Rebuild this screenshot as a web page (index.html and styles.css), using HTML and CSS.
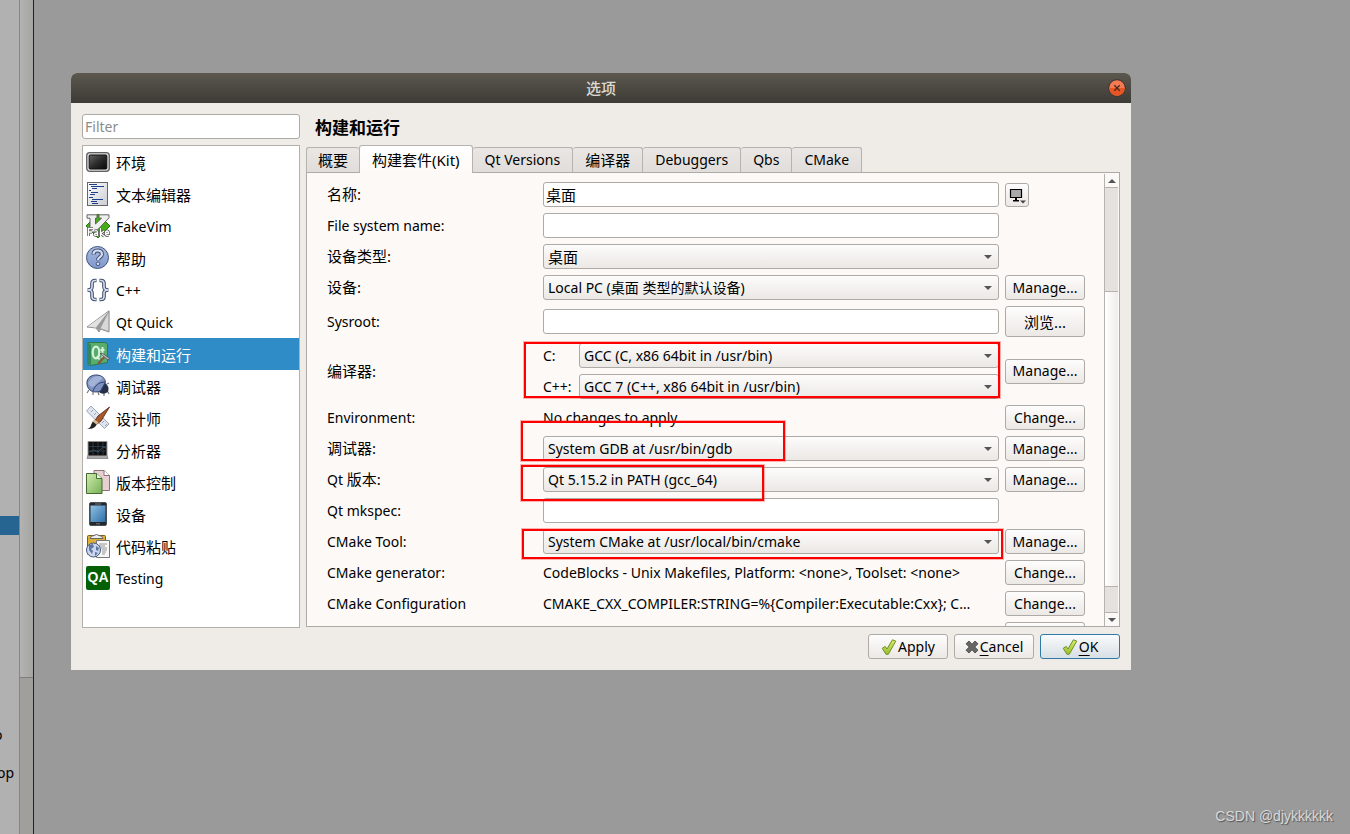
FILE: index.html
```html
<!DOCTYPE html>
<html lang="zh-CN">
<head>
<meta charset="utf-8">
<title>选项</title>
<link rel="stylesheet" href="styles.css">
</head>
<body>
<svg class="defs" width="0" height="0" aria-hidden="true">
  <defs>
    <linearGradient id="dark" x1="0" y1="0" x2="1" y2="1"><stop offset="0" stop-color="#666"/><stop offset=".5" stop-color="#2c2c2c"/><stop offset="1" stop-color="#080808"/></linearGradient>
    <linearGradient id="paper" x1="0" y1="0" x2="1" y2="1"><stop offset="0" stop-color="#fff"/><stop offset="1" stop-color="#c9ccd2"/></linearGradient>
    <linearGradient id="blue" x1="0" y1="0" x2="0" y2="1"><stop offset="0" stop-color="#a9bbe0"/><stop offset="1" stop-color="#7f97cb"/></linearGradient>
    <linearGradient id="screen" x1="0" y1="0" x2="1" y2="1"><stop offset="0" stop-color="#8fc1e4"/><stop offset="1" stop-color="#2f6fa8"/></linearGradient>
    <linearGradient id="green" x1="0" y1="0" x2="1" y2="1"><stop offset="0" stop-color="#d3ecb0"/><stop offset="1" stop-color="#74b055"/></linearGradient>
    <linearGradient id="tick" x1="0" y1="0" x2="0" y2="1"><stop offset="0" stop-color="#d8ec6a"/><stop offset="1" stop-color="#97bf2c"/></linearGradient>
    <symbol id="i-check" viewBox="0 0 16 16"><path d="M1.200 9.300 4.200 7.400l1.800 2.600L11.400 .8l3.400 1.300L7.300 15.300H5z" fill="url(#tick)" stroke="#6f8f2a" stroke-width="1" stroke-linejoin="round"/></symbol>
  </defs>
</svg>
<div class="desktop">
  <aside class="behind">
    <div class="behind-list">
      <div class="behind-selected"></div>
      <span class="behind-text first">o</span>
      <span class="behind-text second">op</span>
    </div>
    <div class="behind-scroll"><div class="behind-handle"></div></div>
  </aside>
  <main class="stage">
    <section class="dialog" aria-label="选项">
      <header class="titlebar">
        <span class="title">选项</span>
        <button class="close" aria-label="关闭"><svg viewBox="0 0 18 18" width="18" height="18"><circle cx="9" cy="9" r="8.300" fill="#f37a52" stroke="#37302b" stroke-width="1"/><path d="M1.200 9a7.800 7.800 0 0 0 15.600 0z" fill="#e65523"/><path d="m6.300 6.300 5.400 5.400m0-5.400-5.400 5.400" stroke="#49281b" stroke-width="1.300"/></svg></button>
      </header>
      <div class="body">
        <nav class="side">
          <input class="box filter" type="text" placeholder="Filter" aria-label="Filter">
          <ul class="categories">
            <li class="cjk"><svg class="icon" viewBox="0 0 24 24"><rect x=".7" y="2.700" width="22.600" height="18.600" rx="3" fill="#d9d9d9" stroke="#606060" stroke-width="1.300"/><rect x="3.200" y="5" width="17.600" height="14" rx="1" fill="url(#dark)" stroke="#111"/></svg><span>环境</span></li>
            <li class="cjk"><svg class="icon" viewBox="0 0 24 24"><rect x="1.500" y=".5" width="20" height="23" fill="url(#paper)" stroke="#666"/><path d="M3 2.500h8M5 4.500h13M6 6.500h5M3 8.500h2M5 10.500h7M4 12.500h5M3 15.500h4M6 17.500h11M5 19.500h6M6 21.500h6" stroke="#1f3f8d" stroke-width="1"/></svg><span>文本编辑器</span></li>
            <li><svg class="icon" viewBox="0 0 24 24"><path d="M12 0 24 12 12 24 0 12z" fill="#44ad18" stroke="#287a0c"/><path d="M1 .8h10v3.400H9.500V10l6-5.800H13V.8h10v3L9.500 18H4V4.200H1z" fill="#efefef" stroke="#555" stroke-width=".9"/><path d="M2.500 22v-7.500H7M2.500 18H6M8.500 17q3-1 3 1v4M11.500 19q-3 0-3 1.500t3 .5M14.500 14v8M18 17l-3.500 2.500L18 22M19.500 19.500h3q0-2.500-1.500-2.500t-1.500 2.500 3 2" fill="none" stroke="#555" stroke-width="2.800"/><path d="M2.500 22v-7.500H7M2.500 18H6M8.500 17q3-1 3 1v4M11.500 19q-3 0-3 1.500t3 .5M14.500 14v8M18 17l-3.500 2.500L18 22M19.500 19.500h3q0-2.500-1.500-2.500t-1.500 2.500 3 2" fill="none" stroke="#fff" stroke-width="1.300"/></svg><span>FakeVim</span></li>
            <li class="cjk"><svg class="icon" viewBox="0 0 24 24"><circle cx="11.500" cy="11.500" r="11" fill="url(#blue)" stroke="#43567f"/><path d="M7.500 8.500q0-4 4.200-4t4.200 3.700c0 2.800-3.900 3-3.900 6" fill="none" stroke="#3c4c70" stroke-width="4"/><path d="M7.500 8.200q0-3.700 4.200-3.700t4.200 3.700c0 2.800-3.900 3-3.900 5.700" fill="none" stroke="#d5def1" stroke-width="2.200"/><circle cx="12" cy="17.800" r="1.800" fill="#d5def1" stroke="#3c4c70" stroke-width=".9"/></svg><span>帮助</span></li>
            <li><svg class="icon" viewBox="0 0 24 24"><path d="M10.500 2.500H9Q6 2.500 6 5.500V9q0 3-4.500 3Q6 12 6 15v3.500q0 3 3 3h1.500M13.500 2.500H15q3 0 3 3V9q0 3 4.500 3-4.500 0-4.500 3v3.500q0 3-3 3h-1.500" fill="none" stroke="#3d4b68" stroke-width="3.600"/><path d="M10 2.500H9Q6 2.500 6 5.500V9q0 3-4.500 3Q6 12 6 15v3.500q0 3 3 3h1M14 2.500h1q3 0 3 3V9q0 3 4.500 3-4.500 0-4.500 3v3.500q0 3-3 3h-1" fill="none" stroke="#d3ddef" stroke-width="1.600"/></svg><span>C++</span></li>
            <li><svg class="icon" viewBox="0 0 24 24"><path d="M23 .8 1 17l9 1 3 4 1.500-3 8.500 3z" fill="#d0d0d0" stroke="#858585" stroke-width=".9"/><path d="M22 2 2 16.600l8 1z" fill="#e2e2e2"/><path d="m22.500 1.500-12.500 16 3 4z" fill="#999"/><path d="m22.800 1.500-8.800 17 8.800 3z" fill="#d8d8d8" stroke="#8b8b8b" stroke-width=".6"/></svg><span>Qt Quick</span></li>
            <li class="cjk selected"><svg class="icon" viewBox="0 0 24 24"><path d="M2 .5h17l2.500 2v18L4 23.500l-2-1z" fill="#59ad6b" stroke="#2d7a4c"/><path d="M2 .5 5 3v20l-3-1z" fill="#35855b"/><ellipse cx="10" cy="10.500" rx="3.300" ry="5.800" fill="none" stroke="#d8f3dd" stroke-width="2.200"/><path d="m11 14 2.500 3.500M16.500 5v10h2M14.500 8h4" stroke="#d8f3dd" stroke-width="1.900" fill="none"/><path d="m19 14-7 8" stroke="#8a5645" stroke-width="2.200"/><path d="M14 11.500q3-1 5 1.500l4.500 3.500-1.500 1.500-5-4z" fill="#b8babd" stroke="#4a4f52" stroke-width=".8"/></svg><span>构建和运行</span></li>
            <li class="cjk"><svg class="icon" viewBox="0 0 24 24"><path d="m3 16-2 3m6-1v3m5-3 1 3m8-11 2-1m-1 9 1 2m-5-1v3" stroke="#777" stroke-width="1.200"/><path d="M18 8q6 4 4 10-6 4-10-1z" fill="#26304c"/><path d="M1 10.500C0 3.500 6 .5 11.500 1q7 1 8 7l-5 9C8 19.500 2 17 1 10.500z" fill="#7f93c2" stroke="#34446f"/><path d="M2 9Q6 2 12 2q3 0 5 2L7 13q-4-1-5-4" fill="#a3b3d8"/><path d="M19 8q-9 0-12 9" fill="none" stroke="#34446f"/></svg><span>调试器</span></li>
            <li class="cjk"><svg class="icon" viewBox="0 0 24 24"><path d="m5 0 18 18-4.500 4.500L.5 5z" fill="#dfe5ef" stroke="#9aa6b8"/><path d="m7 4-2 2m5 1-2 2m5 1-2 2m7 3-2 2m5 1-2 2" stroke="#9aa6b8"/><path d="M23.500 1 12 10l-4 6 3 2 4-3z" fill="#a9582c" stroke="#5d2e18" stroke-width=".9"/><path d="m7 15 4 3-2 3q-3 2.500-8 2 3.500-1 4-4z" fill="#222"/><path d="m8.500 13.500 4 3-2 2-4-3z" fill="#d6b893"/></svg><span>设计师</span></li>
            <li class="cjk"><svg class="icon" viewBox="0 0 24 24"><path d="M2 3.500h19v13l1 4H1l1-4z" fill="#a9a9a9" stroke="#757575" stroke-width=".7"/><rect x="2.500" y="4" width="18" height="13.500" fill="#111"/><path d="M7 4v13M12 4v13M17 4v13M3 8.500h17M3 13h17" stroke="#354653" stroke-width=".7"/><path d="m3 14 5-2 4 2 5-5 3 1" fill="none" stroke="#456473" stroke-width=".7"/></svg><span>分析器</span></li>
            <li class="cjk"><svg class="icon" viewBox="0 0 24 24"><path d="M8 .5h10l5.500 5v15H8z" fill="#e7cfd2" stroke="#8d7376"/><path d="M18 .5v5h5.500" fill="#fff" stroke="#8d7376"/><path d="M.5 3.500h10l5.500 5v15H.5z" fill="url(#green)" stroke="#426b31"/><path d="M10.500 3.500v5H16" fill="#edf8df" stroke="#426b31"/></svg><span>版本控制</span></li>
            <li class="cjk"><svg class="icon" viewBox="0 0 24 24"><rect x="3.500" y=".5" width="17" height="23" rx="1.500" fill="#22282e" stroke="#4b5054"/><rect x="4.500" y="3.500" width="15" height="16.500" fill="url(#screen)"/><path d="M9 2h6M10 21.800h4" stroke="#74787c"/></svg><span>设备</span></li>
            <li class="cjk"><svg class="icon" viewBox="0 0 24 24"><rect x="1.500" y="1.500" width="18" height="19" rx="1" fill="#dcaf35" stroke="#7b5d13"/><path d="M4 4.500q1-3 4-3 2.500-2 5 0 3 0 4 3z" fill="#eee" stroke="#666"/><path d="M10.500 6.500h13v17h-13z" fill="#f7f7f7" stroke="#777"/><path d="M13 10h8m-8 2h6m-6 2h8m-5 2h5m-5 2h4m-4 2h3" stroke="#8b8b8b" stroke-width=".9"/><circle cx="7.500" cy="16" r="7" fill="#c9d6ee" stroke="#455879"/><path d="m3 11 4-1 1 3-3 2 2 2-1 3-3-4zm7 1 3 2-1 3-2-1zm-1 6 3 1-3 3z" fill="#5e769f"/></svg><span>代码粘贴</span></li>
            <li><b class="icon qa">QA</b><span>Testing</span></li>
          </ul>
        </nav>
        <div class="content">
          <h1>构建和运行</h1>
          <div class="tabs" role="tablist">
            <button class="cjk" role="tab">概要</button>
            <button class="cjk active" role="tab" aria-selected="true">构建套件(Kit)</button>
            <button role="tab">Qt Versions</button>
            <button class="cjk" role="tab">编译器</button>
            <button role="tab">Debuggers</button>
            <button role="tab">Qbs</button>
            <button role="tab">CMake</button>
          </div>
          <div class="pane">
            <form class="form" onsubmit="return false">
              <label class="cjk" for="name">名称:</label>
              <input class="box cjk" id="name" type="text" value="桌面">
              <button class="btn device" aria-label="图标"><svg width="18" height="18" viewBox="0 0 18 18"><path d="M2.500 3.500h11v8h-11z" fill="#aaa" stroke="#000" stroke-width="1.200"/><path d="M7 12h2v2h2v1.500H5V14h2z"/><path d="M12 14.500h6l-3 3z" fill="#444"/></svg></button>

              <label for="fs">File system name:</label>
              <input class="box" id="fs" type="text">
              <span></span>

              <label class="cjk" for="devtype">设备类型:</label>
              <div class="combo cjk"><select id="devtype"><option>桌面</option></select></div>
              <span></span>

              <label class="cjk" for="device">设备:</label>
              <div class="combo"><select id="device"><option>Local PC (桌面 类型的默认设备)</option></select></div>
              <button class="btn">Manage...</button>

              <label for="sysroot">Sysroot:</label>
              <input class="box" id="sysroot" type="text">
              <button class="btn tall cjk">浏览...</button>

              <span class="cjk">编译器:</span>
              <div class="compilers">
                <label for="cc">C:</label>
                <div class="combo"><select id="cc"><option>GCC (C, x86 64bit in /usr/bin)</option></select></div>
                <label for="cxx">C++:</label>
                <div class="combo"><select id="cxx"><option>GCC 7 (C++, x86 64bit in /usr/bin)</option></select></div>
                <i class="mark mark-compilers"></i>
              </div>
              <button class="btn">Manage...</button>

              <span>Environment:</span>
              <span class="value">No changes to apply</span>
              <button class="btn">Change...</button>

              <label class="cjk" for="dbg">调试器:</label>
              <div class="combo"><select id="dbg"><option>System GDB at /usr/bin/gdb</option></select><i class="mark mark-debugger"></i></div>
              <button class="btn">Manage...</button>

              <label for="qt">Qt <span class="cjk">版本:</span></label>
              <div class="combo"><select id="qt"><option>Qt 5.15.2 in PATH (gcc_64)</option></select><i class="mark mark-qt"></i></div>
              <button class="btn">Manage...</button>

              <label for="mkspec">Qt mkspec:</label>
              <input class="box" id="mkspec" type="text">
              <span></span>

              <label for="cmake">CMake Tool:</label>
              <div class="combo"><select id="cmake"><option>System CMake at /usr/local/bin/cmake</option></select><i class="mark mark-cmake"></i></div>
              <button class="btn">Manage...</button>

              <span>CMake generator:</span>
              <span class="value">CodeBlocks - Unix Makefiles, Platform: &lt;none&gt;, Toolset: &lt;none&gt;</span>
              <button class="btn">Change...</button>

              <span>CMake Configuration</span>
              <span class="value">CMAKE_CXX_COMPILER:STRING=%{Compiler:Executable:Cxx}; C…</span>
              <button class="btn">Change...</button>

              <span></span><span></span>
              <button class="btn" aria-label="更多"></button>
            </form>
            <div class="scrollbar">
              <div class="arrow up"></div>
              <div class="track"><div class="handle"></div></div>
              <div class="arrow down"></div>
            </div>
          </div>
          <footer class="actions">
            <button class="btn"><svg width="16" height="16"><use href="#i-check"/></svg>Apply</button>
            <button class="btn"><svg width="14" height="14" viewBox="0 0 14 14"><path d="m4 1 3 3.200L10 1l3 2.800L9.800 7l3.200 3.200L10 13 7 9.800 4 13l-3-2.800L4.200 7 1 3.800z" fill="#666" stroke="#444" stroke-width=".8"/></svg><span><u>C</u>ancel</span></button>
            <button class="btn default"><svg width="16" height="16"><use href="#i-check"/></svg><span><u>O</u>K</span></button>
          </footer>
        </div>
      </div>
    </section>
    <p class="watermark">CSDN @djykkkkkk</p>
  </main>
</div>
</body>
</html>
```

FILE: styles.css
```css
* { box-sizing: border-box; }
body {
  margin: 0;
  background: #9a9a9a;
  color: #000;
  font: 14px/20px "Noto Sans", "Noto Sans CJK SC", sans-serif;
}
button, input, select { font: inherit; color: inherit; margin: 0; }
.cjk { font-family: "Noto Sans", "Noto Sans CJK SC", sans-serif; font-size: 15px; }
.defs { position: absolute; }

.desktop { display: flex; height: 100vh; overflow: hidden; }

/* Window partly visible behind the dialog */
.behind { display: flex; flex: none; width: 34px; border-right: 1px solid #222; }
.behind-list { width: 20px; overflow: hidden; background: #b1b1b1; border-right: 1px solid #858585; }
.behind-selected { height: 19px; margin-top: 516px; background: #266591; }
.behind-text { display: block; height: 20px; }
.behind-text.first { margin: 190px 0 0 -6px; }
.behind-text.second { margin: 18px 0 0 -3px; }
.behind-scroll { flex: 1; background: #a09f9c; }
.behind-handle { height: 678px; background: linear-gradient(90deg, #b3b3b1, #a5a4a1); border-bottom: 1px solid #7d7d7b; }

.stage { position: relative; display: flex; flex: 1; min-width: 0; padding: 73px 219px 164px 37px; }
.watermark {
  position: absolute; right: 17px; bottom: 8px; margin: 0;
  color: #d8d8d8; text-shadow: 1px 1px 1px #555;
  font-family: "Liberation Sans", sans-serif;
}

.dialog { display: flex; flex: 1; flex-direction: column; min-width: 0; background: #efebe7; border-radius: 6px 6px 0 0; }
.titlebar {
  position: relative; display: flex; align-items: center; justify-content: center; flex: none;
  height: 30px; border-radius: 6px 6px 0 0;
  background: linear-gradient(#5c584f, #3d3b36);
}
.title { color: #dfdbd2; font-size: 15px; font-weight: 500; }
.close { position: absolute; right: 5px; top: 6px; display: flex; padding: 0; border: 0; background: none; }

.body { display: flex; flex: 1; gap: 6px; min-height: 0; padding: 11px; }
.side { display: flex; flex: none; flex-direction: column; gap: 6px; width: 218px; padding-bottom: 31px; }
.box {
  width: 100%; height: 25px; padding: 0 2px;
  border: 1px solid #aeaaa6; border-radius: 3px; background: #fff;
}
.filter::placeholder { color: #8c8c8c; opacity: 1; }
.categories { flex: 1; margin: 0; padding: 0; overflow: hidden; list-style: none; background: #fff; border: 1px solid #b3afab; }
.categories li { display: flex; align-items: center; gap: 6px; height: 32px; padding-left: 3px; }
.categories span { padding-top: 2px; }
.categories .selected { background: #308cc6; color: #fff; }
.icon { flex: none; width: 24px; height: 24px; }
.qa {
  border-radius: 2px; background: #046004; color: #fff; text-align: center;
  font: bold 14px/22px "Liberation Sans", sans-serif;
}

.content { display: flex; flex: 1; flex-direction: column; min-width: 0; }
h1 { margin: 0; padding-left: 9px; font-size: 17px; font-weight: 700; line-height: 27px; }
.tabs { display: flex; align-items: flex-end; height: 31px; }
.tabs button {
  height: 25px; padding: 0 12px; white-space: nowrap;
  border: 1px solid #b6b2ae; border-left-width: 0; border-bottom: 0; border-radius: 3px 3px 0 0;
  background: linear-gradient(#eae6e3, #e1ddda);
}
.tabs button:first-child { padding: 0 11px; border-left-width: 1px; border-right-width: 0; }
.tabs .active {
  z-index: 1; height: 28px; margin-bottom: -1px;
  border-left-width: 1px; background: linear-gradient(#fff, #fdf9f6);
}

.pane { display: flex; flex: 1; min-height: 0; overflow: hidden; background: #fdf9f6; border: 1px solid #aeaaa6; }
.form {
  display: grid; flex: 1; grid-template-columns: 210px minmax(0, 1fr) 80px;
  align-content: start; align-items: center; gap: 6px;
  min-width: 0; padding: 9px 19px 0 20px;
}
.form > span, .form label { white-space: nowrap; line-height: 25px; }
.form > span:empty { height: 25px; }
.value { overflow: hidden; text-overflow: ellipsis; }

.combo { position: relative; min-width: 0; }
.combo select {
  display: block; width: 100%; height: 25px; padding: 0 20px 0 4px;
  appearance: none; border: 1px solid #aeaaa6; border-radius: 3px;
  background: linear-gradient(#fdfcfb, #ebe8e5);
}
.combo::after {
  content: ""; position: absolute; right: 7px; top: 11px; pointer-events: none;
  border: 4px solid transparent; border-top-color: #555; border-bottom: 0;
}
.compilers { position: relative; display: grid; grid-template-columns: 30px minmax(0, 1fr); gap: 6px; }

.btn {
  display: flex; align-items: center; justify-content: center;
  width: 80px; height: 25px; padding: 0; white-space: nowrap;
  border: 1px solid #aeaaa6; border-radius: 3px;
  background: linear-gradient(#fefdfd, #ebe8e5);
}
.tall { height: 31px; }
.device { width: 24px; height: 24px; }
.default { border-color: #2f79a6; background: linear-gradient(#fafbfc, #d7dfe5); }
.actions { display: flex; justify-content: flex-end; gap: 6px; padding-top: 7px; }
.actions svg { margin-right: 1px; }
.actions u { text-underline-offset: 3px; }

/* Red call-outs laid over the form fields */
.mark { position: absolute; z-index: 2; border: 2px solid #f00; box-shadow: 0 0 0 1px #ff000048; pointer-events: none; }
.mark-compilers { inset: -1px -1px 1px -19px; }
.mark-debugger { left: -22px; top: -15px; width: 264px; height: 40px; }
.mark-qt { left: -22px; top: -2px; width: 243px; height: 36px; }
.mark-cmake { inset: 0 -4px -5px -21px; }

.scrollbar { display: flex; flex: none; flex-direction: column; width: 15px; padding: 1px 1px 0 0; }
.scrollbar > * { border-left: 1px solid #b6b2ae; }
.arrow { display: grid; place-items: center; height: 13px; background: #faf9f8; }
.arrow::before { content: ""; border: 4px solid transparent; }
.up::before { border-bottom-color: #555; border-top: 0; }
.down::before { border-top-color: #555; border-bottom: 0; }
.track { flex: 1; padding: 103px 0 25px; background: #e3e2df; border-top: 1px solid #b6b2ae; border-bottom: 1px solid #b6b2ae; }
.handle { height: 100%; background: linear-gradient(90deg, #fff, #efedeb); border-top: 1px solid #b6b2ae; border-bottom: 1px solid #b6b2ae; }
```
